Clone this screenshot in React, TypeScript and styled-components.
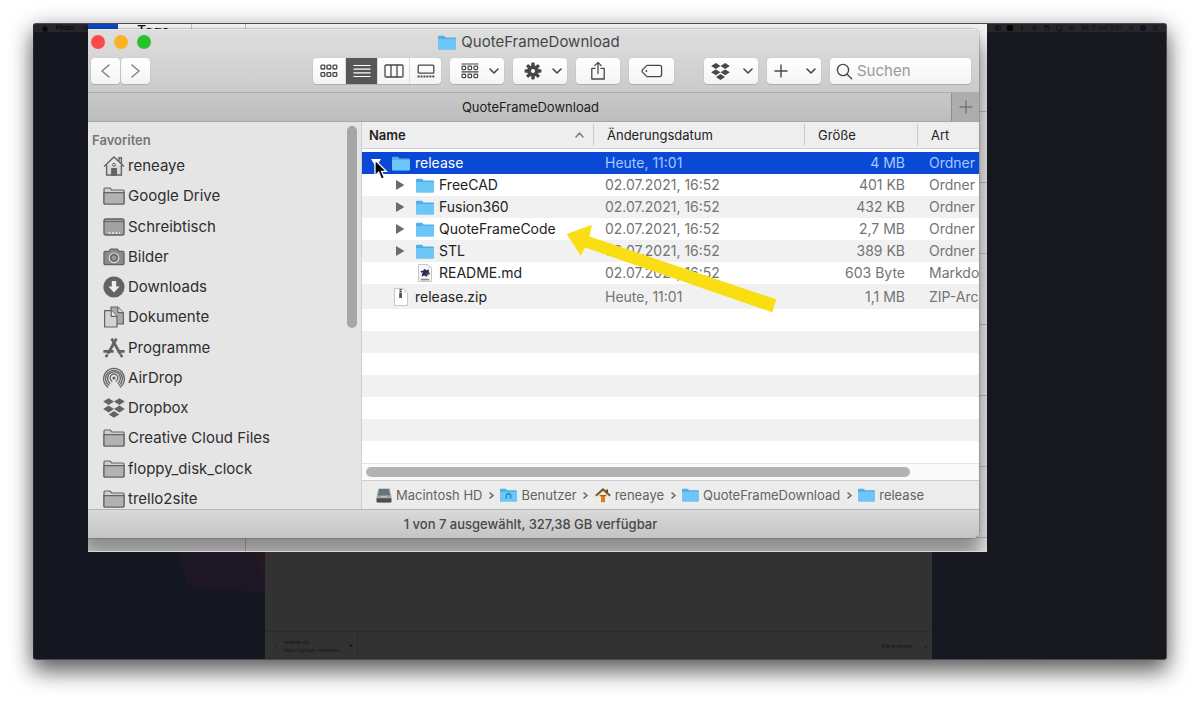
import React from 'react';
import styled, { createGlobalStyle, css } from 'styled-components';
import { Bluetooth, Calendar, List, Search, Volume2, Wifi, Airplay, Grid2x2 } from 'lucide-react';

const GlobalStyle = createGlobalStyle`
  *, *::before, *::after { box-sizing: border-box; }
  body {
    margin: 0;
    background: #fff;
    font-family: Inter, "Liberation Sans", sans-serif;
    color: #2b2b2b;
  }
  button, input { font: inherit; color: inherit; }
  svg { display: block; flex: none; }
`;

/* ---------- desktop ---------- */

const Page = styled.main`
  display: flex;
  min-height: 100vh;
  padding: 23px 33px 44px;
`;

const Desktop = styled.section`
  position: relative;
  flex: 1;
  min-height: 637px;
  border-radius: 3px;
  overflow: hidden;
  border: 1px solid #4a4b50;
  border-left-color: #25262d;
  background: linear-gradient(90deg, #141620 0%, #151722 60%, #18191f 100%);
`;

const DesktopFrame = styled.div`
  display: flex;
  flex: 1;
  border-radius: 3px;
  box-shadow: 0 12px 22px rgba(0, 0, 0, 0.55), 0 2px 22px rgba(0, 0, 0, 0.22);
`;

const MenuBar = styled.header`
  display: flex;
  align-items: center;
  gap: 8px;
  height: 8px;
  padding: 0 8px 0 8px;
  background: #26272a;
  color: #0b0b0d;
  font-size: 6px;
  line-height: 8px;
`;

const MenuExtras = styled.div`
  display: flex;
  align-items: center;
  gap: 6px;
  margin-left: auto;
`;

const Wallpaper = styled.svg`
  position: absolute;
  left: 140px;
  bottom: 60px;
`;

const Browser = styled.section`
  position: absolute;
  left: 231px;
  right: 234px;
  bottom: 0;
  height: 120px;
  display: flex;
  flex-direction: column;
  justify-content: flex-end;
  background: #323232;
`;

const DownloadShelf = styled.div`
  display: flex;
  align-items: center;
  height: 28px;
  padding-right: 5px;
  border-top: 1px solid #2c2c2c;
  color: #161616;
  font-size: 5px;
  line-height: 8px;
`;

const Download = styled.div`
  display: flex;
  align-items: center;
  gap: 7px;
  width: 93px;
  height: 26px;
  padding: 0 5px 0 10px;
  border-right: 1px solid #2a2a2a;
`;

const DownloadText = styled.div`
  flex: 1;
  white-space: nowrap;
`;

const ShelfActions = styled.div`
  display: flex;
  gap: 11px;
  margin-left: auto;
`;

/* ---------- magnified view ---------- */

const Lens = styled.section`
  position: absolute;
  left: 54px;
  right: 179px;
  top: 0;
  bottom: 107px;
  display: flex;
  flex-direction: column;
  padding-bottom: 13px;
  overflow: hidden;
  background: #f3f3f3;
  border-bottom: 1px solid #d8d8d8;
`;

const BackWindow = styled.div`
  position: absolute;
  inset: 0;
  display: grid;
  grid-template-columns: 158px 1fr;
`;

const BackPane = styled.div`
  border-right: 1px solid #bdbdbd;
`;

const BackRows = styled.div`
  background: repeating-linear-gradient(#f3f3f3 0 70px, #c4c7d0 70px 71px) 0 17px;
`;

const BackStrip = styled.div`
  display: flex;
  gap: 19px;
  height: 5px;
  overflow: hidden;
  position: relative;
  font-size: 14px;
  line-height: 14px;
  font-weight: 500;
`;

const BackTag = styled.span`
  width: 30px;
  background: #0a49c4;
`;

const BackLabel = styled.span`
  width: 55px;
  color: #111;
  border-right: 1px solid #c6c6c6;
`;

/* ---------- Finder window ---------- */

const Finder = styled.section`
  position: relative;
  display: flex;
  flex-direction: column;
  flex: 1;
  min-height: 0;
  margin: 0 8px 0 -6px;
  border-radius: 6px;
  overflow: hidden;
  background: #ececec;
`;

const FinderShade = styled.div`
  display: flex;
  flex-direction: column;
  flex: 1;
  min-height: 0;
  position: relative;

  &::before {
    content: '';
    position: absolute;
    inset: 0 8px 0 -6px;
    border-radius: 6px;
    box-shadow: 0 0 1px 1px rgba(0, 0, 0, 0.16), 0 16px 20px 4px rgba(0, 0, 0, 0.42);
  }
`;

const TitleBar = styled.header`
  display: grid;
  grid-template-rows: 24px 34px;
  height: 64px;
  background: linear-gradient(#dedede, #cbcbcb);
  border-top: 1px solid #e9e9e9;
  border-bottom: 1px solid #adadad;
`;

const TitleRow = styled.div`
  display: grid;
  grid-template-columns: 1fr auto 1fr;
  align-items: center;
  padding: 0 12px 0 9px;
`;

const Lights = styled.div`
  display: flex;
  gap: 9px;
`;

const Light = styled.button<{ $tone: string }>`
  width: 14px;
  height: 14px;
  padding: 0;
  border: 0;
  border-radius: 50%;
  background: ${(p) => p.$tone};
`;

const Title = styled.h1`
  display: flex;
  align-items: center;
  gap: 5px;
  margin: 0;
  font-size: 15px;
  line-height: 20px;
  font-weight: 400;
  color: #474747;
`;

const Toolbar = styled.div`
  display: flex;
  align-items: center;
  gap: 9px;
  padding: 0 8px 0 9px;
`;

const surface = css`
  border: 0;
  border-radius: 4px;
  background: linear-gradient(#fff, #f4f4f4);
  box-shadow: 0 0 1px rgba(0, 0, 0, 0.2), 0 1px 1px rgba(0, 0, 0, 0.14);
`;

const NavPair = styled.div`
  display: flex;
  gap: 1px;
  margin-right: auto;
`;

const ToolButton = styled.button<{ $width: number; $inset?: number; $soft?: boolean }>`
  ${surface}
  display: flex;
  align-items: center;
  justify-content: ${(p) => (p.$inset ? 'space-between' : 'center')};
  width: ${(p) => p.$width}px;
  height: 26px;
  padding: ${(p) => (p.$inset ? `0 5px 0 ${p.$inset}px` : '0')};
  color: ${(p) => (p.$soft ? '#858585' : '#474747')};
`;

const Segments = styled.div`
  ${surface}
  display: flex;
  overflow: hidden;
`;

const Segment = styled.button<{ $active?: boolean }>`
  display: grid;
  place-items: center;
  width: 32px;
  height: 26px;
  padding: 0;
  border: 0;
  border-left: 1px solid #dcdcdc;
  background: ${(p) => (p.$active ? '#575757' : 'transparent')};
  color: ${(p) => (p.$active ? '#fff' : '#474747')};
  &:first-child { border-left: 0; }
`;

const ToolGap = styled.span`
  width: 12px;
`;

const SearchBox = styled.label`
  ${surface}
  display: flex;
  align-items: center;
  gap: 4px;
  width: 141px;
  height: 26px;
  padding: 0 6px;
  color: #4a4a4a;
`;

const SearchInput = styled.input`
  flex: 1;
  min-width: 0;
  padding: 0;
  border: 0;
  outline: 0;
  background: transparent;
  font-size: 15px;
  line-height: 20px;
  &::placeholder { color: #9a9a9a; opacity: 1; }
`;

const TabBar = styled.div`
  display: flex;
  height: 29px;
  background: linear-gradient(#c8c8c8, #bdbdbd);
  border-bottom: 1px solid #a6a6a6;
`;

const Tab = styled.button`
  flex: 1;
  padding: 0 0 0 28px;
  border: 0;
  background: transparent;
  font-size: 13px;
  line-height: 20px;
  color: #1c1c1c;
`;

const NewTab = styled.button`
  display: grid;
  place-items: center;
  width: 28px;
  padding: 0;
  border: 0;
  border-left: 1px solid #8e8e8e;
  background: #adadad;
  color: #757575;
`;

const Body = styled.div`
  display: flex;
  flex: 1;
  min-height: 0;
`;

const Sidebar = styled.nav`
  display: flex;
  width: 280px;
  overflow: hidden;
  background: #e5e5e6;
  border-right: 1px solid #cfcfd4;
`;

const SidebarMain = styled.div`
  flex: 1;
  display: flex;
  flex-direction: column;
  padding-left: 10px;
`;

const SidebarHeading = styled.h2`
  margin: 8px 0 0;
  font-size: 13px;
  line-height: 20px;
  font-weight: 600;
  color: #767676;
`;

const SidebarList = styled.ul`
  flex: 1;
  display: flex;
  flex-direction: column;
  justify-content: space-between;
  margin: 1px 0 -5px;
  padding: 0 0 0 11px;
  list-style: none;
`;

const SidebarLink = styled.a`
  display: flex;
  align-items: center;
  gap: 3px;
  height: 30px;
  font-size: 15px;
  line-height: 20px;
  color: #2e2e2e;
  text-decoration: none;
  svg { color: #636363; }
`;

const SidebarTrack = styled.div`
  width: 14px;
  padding: 4px 4px 0 0;
`;

const SidebarThumb = styled.div`
  height: 202px;
  border-radius: 5px;
  background: #a6a6a7;
`;

const Content = styled.div`
  position: relative;
  display: flex;
  flex-direction: column;
  flex: 1;
  min-width: 0;
  background: #fff;
`;

const FileTable = styled.table`
  width: 100%;
  table-layout: fixed;
  border-collapse: separate;
  border-spacing: 0;
  font-size: 14px;
  line-height: 20px;
`;

const NameCol = styled.col``;
const DateCol = styled.col`width: 211px;`;
const SizeCol = styled.col`width: 113px;`;
const KindCol = styled.col`width: 62px;`;

const HeadCell = styled.th`
  height: 27px;
  padding: 0;
  background: #eee;
  border-bottom: 1px solid #d2d2d2;
  text-align: left;
  font-size: 13px;
  line-height: 20px;
  font-weight: 400;
  color: #222;
`;

const HeadInner = styled.div<{ $first?: boolean }>`
  display: flex;
  align-items: center;
  justify-content: space-between;
  height: 22px;
  padding: 0 9px 0 ${(p) => (p.$first ? 6 : 13)}px;
  border-left: 1px solid ${(p) => (p.$first ? 'transparent' : '#cbcbcb')};
  font-weight: ${(p) => (p.$first ? 600 : 400)};
  svg { color: #808080; }
`;

const HeadGap = styled.tbody`
  line-height: 3px;
  td { height: 3px; padding: 0; }
`;

const FileRow = styled.tr<{ $selected?: boolean; $tall?: boolean }>`
  height: ${(p) => (p.$tall ? 25 : 22)}px;
  color: #222;
  background: #fff;
  &:nth-child(odd) { background: #f1f1f1; }
  ${(p) => p.$selected && css`
    && { background: #0a49d6; color: #fff; }
  `}
`;

const NameCell = styled.th`
  padding: 0;
  font-weight: 400;
  text-align: left;
`;

const NameInner = styled.div<{ $level: number }>`
  display: flex;
  align-items: center;
  padding-left: ${(p) => 6 + p.$level * 24}px;
`;

const Disclosure = styled.button<{ $open?: boolean }>`
  display: grid;
  place-items: center;
  width: 16px;
  height: 20px;
  padding: 0;
  border: 0;
  background: transparent;
  color: ${(p) => (p.$open ? '#fff' : '#6b6b6b')};
`;

const DisclosureSpace = styled.span`
  width: 16px;
`;

const FileIcon = styled.span`
  display: grid;
  place-items: center;
  width: 18px;
  margin: 0 5px 0 8px;
`;

const Cell = styled.td<{ $selected?: boolean; $right?: boolean }>`
  padding: 0 ${(p) => (p.$right ? 12 : 0)}px 0 12px;
  overflow: hidden;
  white-space: nowrap;
  text-align: ${(p) => (p.$right ? 'right' : 'left')};
  color: ${(p) => (p.$selected ? '#a5c8ff' : '#747474')};
`;

const Stripes = styled.div`
  flex: 1;
  background: repeating-linear-gradient(#fff 0 22px, #f1f1f1 22px 44px);
`;

const ScrollTrack = styled.div`
  height: 17px;
  padding: 3px 69px 0 4px;
  background: #fafafa;
  border-top: 1px solid #e4e4e4;
`;

const ScrollThumb = styled.div`
  height: 10px;
  border-radius: 5px;
  background: #b3b3b3;
`;

const PathBar = styled.nav`
  display: flex;
  align-items: center;
  height: 29px;
  padding-left: 14px;
  background: #ececec;
  border-top: 1px solid #cfcfcf;
  font-size: 13px;
  line-height: 20px;
  color: #636363;
`;

const PathItem = styled.a`
  display: flex;
  align-items: center;
  gap: 4px;
  color: inherit;
  text-decoration: none;
`;

const PathArrow = styled.span`
  display: grid;
  place-items: center;
  width: 18px;
`;

const StatusBar = styled.footer`
  display: grid;
  place-items: center;
  height: 29px;
  padding-bottom: 1px;
  border-top: 1px solid #b4b4b4;
  background: linear-gradient(#dadada, #c4c4c4);
  font-size: 13px;
  line-height: 20px;
  font-weight: 500;
  color: #484848;
`;

const Pointer = styled.svg`
  position: absolute;
  left: 10px;
  top: 35px;
`;

const Callout = styled.svg`
  position: absolute;
  left: 200px;
  top: 100px;
`;

/* ---------- icons ---------- */

const BlueFolder = ({ w = 18, badge = false }: { w?: number; badge?: boolean }) => (
  <svg width={w} height={w === 18 ? 15 : 14} viewBox="0 0 18 15" preserveAspectRatio="none">
    <path d="M0 2Q0 .8 1.2.8H6L7.6 2.4H17Q18 2.4 18 3.4V13.5Q18 14.5 17 14.5H1Q0 14.5 0 13.5Z" fill="#52afe6" />
    <path d="M0 4H18V13.3Q18 14.2 17 14.2H1Q0 14.2 0 13.3Z" fill="#6cc7f8" />
    {badge && <path d="M5.8 11.4V8.4a3.2 3.2 0 0 1 6.4 0v3H10.4V8.6a1.4 1.4 0 0 0-2.8 0v2.8Z" fill="#318fcf" />}
  </svg>
);

const GrayFolder = () => (
  <svg width="22" height="18" viewBox="0 0 22 18" fill="#b2b2b2" stroke="currentColor" strokeWidth="1.2">
    <path d="M1 16V2.2Q1 1 2 1H7L8.8 3H20Q21 3 21 4V16Q21 17 20 17H2Q1 17 1 16Z" fill="#d0d0d0" />
    <path d="M1 5.6H21V16Q21 17 20 17H2Q1 17 1 16Z" />
  </svg>
);

const HomeIcon = () => (
  <svg width="22" height="22" viewBox="0 0 22 22" fill="none" stroke="currentColor" strokeWidth="1.4">
    <path d="M3.6 10V20H18.4V10" fill="#d9d9d9" />
    <path d="M1 11.4 11 2 21 11.4" />
    <path d="M16 6.5V2.8H18.4V9" />
    <path d="M8.8 20V13.6H13.2V20Z" fill="currentColor" />
    <circle cx="11" cy="9.8" r="1.5" strokeWidth="1" />
  </svg>
);

const DesktopIcon = () => (
  <svg width="22" height="18" viewBox="0 0 22 18">
    <rect x="1" y="1" width="20" height="16" rx="1.8" fill="#a2a2a2" stroke="currentColor" strokeWidth="1.4" />
    <path d="M1 3.6H21" stroke="currentColor" />
    <path d="M5.5 15h2M9 15h2M12.5 15h2M16 15h1" stroke="#eee" strokeWidth="1.6" />
  </svg>
);

const CameraIcon = () => (
  <svg width="22" height="18" viewBox="0 0 22 18">
    <path d="M1 4.4Q1 3.4 2 3.4H6L7.6 1.2H14.4L16 3.4H20Q21 3.4 21 4.4V15.6Q21 16.6 20 16.6H2Q1 16.6 1 15.6Z" fill="#8b8b8b" stroke="currentColor" strokeWidth="1.3" />
    <circle cx="11" cy="9.8" r="4.8" fill="#777" stroke="#d6d6d6" strokeWidth="1.2" />
    <circle cx="11" cy="9.8" r="3" fill="#999" stroke="#606060" />
  </svg>
);

const DownloadsIcon = () => (
  <svg width="22" height="22" viewBox="0 0 22 22">
    <circle cx="11" cy="11" r="10.6" fill="currentColor" />
    <path d="M8.8 5H13.2V10.4H16.6L11 16.6 5.4 10.4H8.8Z" fill="#eee" />
  </svg>
);

const DocumentsIcon = () => (
  <svg width="22" height="22" viewBox="0 0 22 22" stroke="currentColor" strokeWidth="1.2" strokeLinejoin="round">
    <path d="M8 1H14.8L20.4 6.6V18H8Z" fill="#aaa" />
    <path d="M14.8 1V6.6H20.4" fill="#d5d5d5" />
    <path d="M1.6 4.6H8.2L14 10.4V21H1.6Z" fill="#d3d3d3" />
    <path d="M8.2 4.6V10.4H14" fill="#eee" />
  </svg>
);

const AppsIcon = () => (
  <svg width="22" height="22" viewBox="0 0 22 22" fill="none" stroke="currentColor">
    <path d="M8.6 1.6 17.4 17" strokeWidth="2.8" />
    <path d="M13.4 1.6 5 16.6" strokeWidth="2.8" />
    <path d="M.4 14.4H10.6M14.6 14.4H21.6" strokeWidth="2.6" />
    <path d="M4.4 17.4 2.8 20.2M17.6 17.4 19.2 20.2" strokeWidth="2.6" />
  </svg>
);

const AirDropIcon = () => (
  <svg width="22" height="22" viewBox="0 0 22 22" fill="none" stroke="currentColor" strokeWidth="1.3" strokeLinecap="round">
    <circle cx="11" cy="11" r="1.6" fill="currentColor" stroke="none" />
    <path d="M8.9 14.2a3.9 3.9 0 1 1 4.2 0" />
    <path d="M7 16.2a6.4 6.4 0 1 1 8 0" />
    <path d="M5.8 18.3a8.4 8.4 0 1 1 10.4 0" />
    <path d="M4.6 20a10.4 10.4 0 1 1 12.8 0" />
  </svg>
);

const DropboxIcon = ({ size = 22 }: { size?: number }) => (
  <svg width={size} height={size} viewBox="0 0 22 22" fill="currentColor">
    <path d="M5.6 1.2 11 4.6 5.6 8 .2 4.6ZM16.4 1.2 21.8 4.6 16.4 8 11 4.6ZM5.6 8.6 11 12 5.6 15.4 .2 12ZM16.4 8.6 21.8 12 16.4 15.4 11 12ZM11 14 16.2 17.4 11 20.8 5.8 17.4Z" />
  </svg>
);

const Chevron = ({ dir, w = 10, h = 14 }: { dir: 'left' | 'right' | 'up' | 'down'; w?: number; h?: number }) => {
  const d = {
    left: `M${w - 1} 1 1 ${h / 2} ${w - 1} ${h - 1}`,
    right: `M1 1 ${w - 1} ${h / 2} 1 ${h - 1}`,
    up: `M1 ${h - 1} ${w / 2} 1 ${w - 1} ${h - 1}`,
    down: `M1 1 ${w / 2} ${h - 1} ${w - 1} 1`,
  }[dir];
  return (
    <svg width={w} height={h} fill="none" stroke="currentColor" strokeWidth="1.6" strokeLinecap="round" strokeLinejoin="round">
      <path d={d} />
    </svg>
  );
};

const IconView = () => (
  <svg width="18" height="14" viewBox="0 0 18 14" fill="none" stroke="currentColor" strokeWidth="1.3">
    {[1, 7, 13].map((x) => [1.2, 8.6].map((y) => <rect key={`${x}-${y}`} x={x} y={y} width="3.8" height="3.8" rx=".8" />))}
  </svg>
);

const ListView = () => (
  <svg width="18" height="14" viewBox="0 0 18 14" stroke="currentColor" strokeWidth="1.2">
    <path d="M.5 1.5h17M.5 5.2h17M.5 8.8h17M.5 12.5h17" />
  </svg>
);

const ColumnView = () => (
  <svg width="20" height="14" viewBox="0 0 20 14" fill="none" stroke="currentColor" strokeWidth="1.3">
    <rect x="1" y="1" width="18" height="12" rx="1" />
    <path d="M7 1v12M13 1v12" />
  </svg>
);

const GalleryView = () => (
  <svg width="18" height="14" viewBox="0 0 18 14" fill="none" stroke="currentColor" strokeWidth="1.3">
    <rect x="1.2" y="1.2" width="15.6" height="8" rx="1" />
    <path d="M.6 12.4H17.4" strokeWidth="2" strokeDasharray="2 .95" />
  </svg>
);

const GroupIcon = () => (
  <svg width="18" height="16" viewBox="0 0 18 16" fill="none" stroke="currentColor" strokeWidth="1.2">
    <path d="M.5 1H17.5M.5 8.8H17.5" />
    {[1, 7, 13].map((x) => [3.2, 11.2].map((y) => <rect key={`${x}-${y}`} x={x} y={y} width="3.6" height="3.4" rx=".8" />))}
  </svg>
);

const GearIcon = () => (
  <svg width="18" height="18" viewBox="-9 -9 18 18">
    {[0, 45, 90, 135].map((a) => (
      <rect key={a} x="-1.7" y="-8.4" width="3.4" height="16.8" rx=".8" fill="currentColor" transform={`rotate(${a})`} />
    ))}
    <circle r="5.8" fill="currentColor" />
    <circle r="2.1" fill="#fafafa" />
  </svg>
);

const ShareIcon = () => (
  <svg width="16" height="20" viewBox="0 0 16 20" fill="none" stroke="currentColor" strokeWidth="1.3" strokeLinecap="round" strokeLinejoin="round">
    <path d="M5 7.4H1.8V18H14.2V7.4H11M8 12.6V1.6M4.8 4.6 8 1.4 11.2 4.6" />
  </svg>
);

const TagIcon = () => (
  <svg width="22" height="14" viewBox="0 0 22 14" fill="none" stroke="currentColor" strokeWidth="1.3" strokeLinejoin="round">
    <path d="M6 1.4H18.6Q20.6 1.4 20.6 3.4V10.6Q20.6 12.6 18.6 12.6H6L1.6 8.4Q.6 7 1.6 5.6Z" />
    <circle cx="5.4" cy="7" r=".9" fill="currentColor" stroke="none" />
  </svg>
);

const PlusIcon = () => (
  <svg width="14" height="14" viewBox="0 0 14 14" stroke="currentColor" strokeWidth="1.4">
    <path d="M7 .5v13M.5 7h13" />
  </svg>
);

const SearchIcon = () => (
  <svg width="17" height="17" viewBox="0 0 17 17" fill="none" stroke="currentColor" strokeWidth="1.4" strokeLinecap="round">
    <circle cx="7" cy="7" r="5.6" />
    <path d="M11.2 11.2 15.6 15.8" />
  </svg>
);

const Triangle = ({ open = false }: { open?: boolean }) => (
  <svg width="10" height="10" viewBox="0 0 10 10" fill="currentColor">
    <path d={open ? 'M0 1H10L5 9Z' : 'M1 0 9.4 5 1 10Z'} />
  </svg>
);

const MarkdownFile = () => (
  <svg width="14" height="18" viewBox="0 0 14 18">
    <path d="M.5.5H10L13.5 4V17.5H.5Z" fill="#f7f7f7" stroke="#c6c6c6" />
    <path d="M10 .5V4H13.5Z" fill="#ddd" />
    <path d="M2.4 7 5 6.8 6.6 4.8 8.2 6.2 11 5.6 10.8 8 12.2 10 9.8 10.8 8.8 12.8 6.4 11.4 3.6 12.6 4.2 9.6Z" fill="#22345c" />
    <path d="M7.6 8.8 11.4 9.4 9 11.2Z" fill="#c03840" />
    <path d="M3.2 8 5.4 8.6 4.4 10Z" fill="#5a9bd8" />
    <path d="M2.8 15.6H11.2" stroke="#8d8d8d" strokeWidth="1.6" />
  </svg>
);

const ZipFile = () => (
  <svg width="14" height="18" viewBox="0 0 14 18">
    <path d="M.5.5H9.6L13.5 4.4V17.5H.5Z" fill="#fff" stroke="#c8c8c8" />
    <path d="M9.6.5V4.4H13.5Z" fill="#e3e3e3" />
    <path d="M6.6 1V10" stroke="#444" strokeWidth="2.2" strokeDasharray="1.4 .5" />
    <path d="M6.6 5.4V10" stroke="#555" strokeWidth="2.6" />
  </svg>
);

const DiskIcon = () => (
  <svg width="16" height="15" viewBox="0 0 16 15">
    <path d="M2.4 .4H13.6L15.4 8.6V13.2Q15.4 14.6 14.2 14.6H1.8Q.6 14.6 .6 13.2V8.6Z" fill="#a3a8ac" />
    <path d="M3.2 1H12.8L14 7.4H2Z" fill="#66737a" />
    <path d="M.6 10.2H15.4V13.2Q15.4 14.6 14.2 14.6H1.8Q.6 14.6 .6 13.2Z" fill="#4b5054" />
    <path d="M5 8.2Q8 10.4 11 7.8" stroke="#b4d2de" fill="none" />
  </svg>
);

const SmallHome = () => (
  <svg width="16" height="15" viewBox="0 0 16 15">
    <path d="M2.6 6.6V14H13.4V6.6L8 2Z" fill="#f6ecdc" />
    <path d="M11 1.4H13V5H11Z" fill="#6f4a2c" />
    <path d="M.8 7.8 8 1.4 15.2 7.8" fill="none" stroke="#7a5432" strokeWidth="2" />
    <path d="M6 7.6H10V14.2H6Z" fill="#cf8424" />
    <path d="M4.6 7.6H11.4" stroke="#a8661e" strokeWidth="1.4" />
  </svg>
);

/* ---------- data ---------- */

const places: [string, React.ReactNode][] = [
  ['reneaye', <HomeIcon />],
  ['Google Drive', <GrayFolder />],
  ['Schreibtisch', <DesktopIcon />],
  ['Bilder', <CameraIcon />],
  ['Downloads', <DownloadsIcon />],
  ['Dokumente', <DocumentsIcon />],
  ['Programme', <AppsIcon />],
  ['AirDrop', <AirDropIcon />],
  ['Dropbox', <DropboxIcon />],
  ['Creative Cloud Files', <GrayFolder />],
  ['floppy_disk_clock', <GrayFolder />],
  ['trello2site', <GrayFolder />],
];

type Entry = {
  name: string;
  date: string;
  size: string;
  kind: string;
  level: number;
  type: 'folder' | 'markdown' | 'zip';
  open?: boolean;
};

const entries: Entry[] = [
  { name: 'release', date: 'Heute, 11:01', size: '4 MB', kind: 'Ordner', level: 0, type: 'folder', open: true },
  { name: 'FreeCAD', date: '02.07.2021, 16:52', size: '401 KB', kind: 'Ordner', level: 1, type: 'folder' },
  { name: 'Fusion360', date: '02.07.2021, 16:52', size: '432 KB', kind: 'Ordner', level: 1, type: 'folder' },
  { name: 'QuoteFrameCode', date: '02.07.2021, 16:52', size: '2,7 MB', kind: 'Ordner', level: 1, type: 'folder' },
  { name: 'STL', date: '02.07.2021, 16:52', size: '389 KB', kind: 'Ordner', level: 1, type: 'folder' },
  { name: 'README.md', date: '02.07.2021, 16:52', size: '603 Byte', kind: 'Markdown', level: 1, type: 'markdown' },
  { name: 'release.zip', date: 'Heute, 11:01', size: '1,1 MB', kind: 'ZIP-Archiv', level: 0, type: 'zip' },
];

const fileIcons = { folder: <BlueFolder />, markdown: <MarkdownFile />, zip: <ZipFile /> };

const path: [string, React.ReactNode][] = [
  ['Macintosh HD', <DiskIcon />],
  ['Benutzer', <BlueFolder w={17} badge />],
  ['reneaye', <SmallHome />],
  ['QuoteFrameDownload', <BlueFolder w={17} />],
  ['release', <BlueFolder w={17} />],
];

/* ---------- sections ---------- */

const FileList = () => (
  <FileTable>
    <colgroup>
      <NameCol />
      <DateCol />
      <SizeCol />
      <KindCol />
    </colgroup>
    <thead>
      <tr>
        <HeadCell scope="col"><HeadInner $first>Name<Chevron dir="up" w={9} h={6} /></HeadInner></HeadCell>
        <HeadCell scope="col"><HeadInner>Änderungsdatum</HeadInner></HeadCell>
        <HeadCell scope="col"><HeadInner>Größe</HeadInner></HeadCell>
        <HeadCell scope="col"><HeadInner>Art</HeadInner></HeadCell>
      </tr>
    </thead>
    <HeadGap aria-hidden="true"><tr><td colSpan={4} /></tr></HeadGap>
    <tbody>
      {entries.map((e) => (
        <FileRow key={e.name} $selected={e.open} $tall={e.type === 'zip'}>
          <NameCell scope="row">
            <NameInner $level={e.level}>
              {e.type === 'folder' ? (
                <Disclosure $open={e.open} aria-label={`${e.name} ein- oder ausklappen`} aria-expanded={!!e.open}>
                  <Triangle open={e.open} />
                </Disclosure>
              ) : (
                <DisclosureSpace />
              )}
              <FileIcon>{fileIcons[e.type]}</FileIcon>
              {e.name}
            </NameInner>
          </NameCell>
          <Cell $selected={e.open}>{e.date}</Cell>
          <Cell $selected={e.open} $right>{e.size}</Cell>
          <Cell $selected={e.open}>{e.kind}</Cell>
        </FileRow>
      ))}
    </tbody>
  </FileTable>
);

const FinderToolbar = () => (
  <Toolbar>
    <NavPair>
      <ToolButton $width={29} $soft aria-label="Zurück"><Chevron dir="left" w={9} h={14} /></ToolButton>
      <ToolButton $width={29} $soft aria-label="Vorwärts"><Chevron dir="right" w={9} h={14} /></ToolButton>
    </NavPair>
    <Segments>
      <Segment aria-label="Symbole"><IconView /></Segment>
      <Segment $active aria-label="Liste"><ListView /></Segment>
      <Segment aria-label="Spalten"><ColumnView /></Segment>
      <Segment aria-label="Galerie"><GalleryView /></Segment>
    </Segments>
    <ToolButton $width={54} $inset={11} aria-label="Gruppieren"><GroupIcon /><Chevron dir="down" w={10} h={6} /></ToolButton>
    <ToolButton $width={54} $inset={11} aria-label="Aktionen"><GearIcon /><Chevron dir="down" w={10} h={6} /></ToolButton>
    <ToolButton $width={44} aria-label="Teilen"><ShareIcon /></ToolButton>
    <ToolButton $width={45} aria-label="Tags"><TagIcon /></ToolButton>
    <ToolGap />
    <ToolButton $width={54} $inset={7} aria-label="Dropbox"><DropboxIcon size={19} /><Chevron dir="down" w={10} h={6} /></ToolButton>
    <ToolButton $width={54} $inset={7} aria-label="Hinzufügen"><PlusIcon /><Chevron dir="down" w={10} h={6} /></ToolButton>
    <SearchBox>
      <SearchIcon />
      <SearchInput type="text" placeholder="Suchen" aria-label="Suchen" />
    </SearchBox>
  </Toolbar>
);

const FinderWindow = () => (
  <Finder>
    <TitleBar>
      <TitleRow>
        <Lights>
          <Light $tone="#fb4a48" aria-label="Schließen" />
          <Light $tone="#fdb124" aria-label="Minimieren" />
          <Light $tone="#28c231" aria-label="Vergrößern" />
        </Lights>
        <Title><BlueFolder />QuoteFrameDownload</Title>
      </TitleRow>
      <FinderToolbar />
    </TitleBar>
    <TabBar>
      <Tab>QuoteFrameDownload</Tab>
      <NewTab aria-label="Neuer Tab"><PlusIcon /></NewTab>
    </TabBar>
    <Body>
      <Sidebar>
        <SidebarMain>
          <SidebarHeading>Favoriten</SidebarHeading>
          <SidebarList>
            {places.map(([label, icon]) => (
              <li key={label}><SidebarLink href="#">{icon}{label}</SidebarLink></li>
            ))}
          </SidebarList>
        </SidebarMain>
        <SidebarTrack><SidebarThumb /></SidebarTrack>
      </Sidebar>
      <Content>
        <FileList />
        <Stripes />
        <ScrollTrack><ScrollThumb /></ScrollTrack>
        <PathBar>
          {path.map(([label, icon], i) => (
            <React.Fragment key={label}>
              {i > 0 && <PathArrow><Chevron dir="right" w={5} h={7} /></PathArrow>}
              <PathItem href="#">{icon}{label}</PathItem>
            </React.Fragment>
          ))}
        </PathBar>
        <Pointer width="18" height="26" viewBox="0 0 18 26">
          <path d="M3 3V18.6L6.6 15.2 9.4 22 12.4 20.8 9.6 14.4H14.4Z" fill="#000" stroke="#fff" strokeWidth="1.3" />
        </Pointer>
        <Callout width="220" height="94" viewBox="0 0 220 94">
          <path d="M4.7 12 30 2.7 27.4 14.6 214.3 77.3 210.3 90.3 23 25.6 18.7 33.7Z" fill="#f9de14" />
        </Callout>
      </Content>
    </Body>
    <StatusBar>1 von 7 ausgewählt, 327,38 GB verfügbar</StatusBar>
  </Finder>
);

export default function App() {
  return (
    <>
      <GlobalStyle />
      <Page>
        <DesktopFrame>
          <Desktop>
            <MenuBar>
              <svg width="6" height="7" viewBox="0 0 12 14" fill="currentColor">
                <path d="M6 4C7 3 10 2.6 11.4 5 9.4 6.5 9.6 9 11.8 10 11 12.5 9 14.5 6.4 13.4 3.5 14.5 0 11 .4 7 .8 3.6 4 2.8 6 4ZM6 3.2C6 1.5 7 .4 8.6 0 8.6 1.8 7.6 3 6 3.2Z" />
              </svg>
              <b>Finder</b>
              <span>Ablage</span>
              <MenuExtras>
                <Grid2x2 size={6} />
                <svg width="6" height="6" viewBox="0 0 6 6"><rect width="6" height="6" rx="1" fill="#060607" /></svg>
                <Bluetooth size={6} />
                <Wifi size={7} />
                <Calendar size={6} />
                <Airplay size={7} />
                <Volume2 size={6} />
                <span>Mi. 7. Juli 11:01</span>
                <Search size={6} />
                <svg width="6" height="6" viewBox="0 0 6 6"><circle cx="3" cy="3" r="2.4" fill="#10142c" stroke="#0b0b0d" /></svg>
                <List size={6} />
              </MenuExtras>
            </MenuBar>
            <Wallpaper width="100" height="60" viewBox="0 0 100 60">
              <path d="M0 0H92V54L14 48Z" fill="#1d1624" />
              <path d="M78 0H92V54Z" fill="#241922" />
            </Wallpaper>
            <Browser>
              <DownloadShelf>
                <Download>
                  <span>!</span>
                  <DownloadText>
                    <div>release.zip</div>
                    <div>https://github-releases...</div>
                  </DownloadText>
                  <Chevron dir="up" w={4} h={3} />
                </Download>
                <ShelfActions>
                  <span>Alle anzeigen</span>
                  <span>×</span>
                </ShelfActions>
              </DownloadShelf>
            </Browser>
            <Lens>
              <BackWindow><BackPane /><BackRows /></BackWindow>
              <BackStrip>
                <BackTag />
                <BackLabel>Tags</BackLabel>
              </BackStrip>
              <FinderShade>
                <FinderWindow />
              </FinderShade>
            </Lens>
          </Desktop>
        </DesktopFrame>
      </Page>
    </>
  );
}
